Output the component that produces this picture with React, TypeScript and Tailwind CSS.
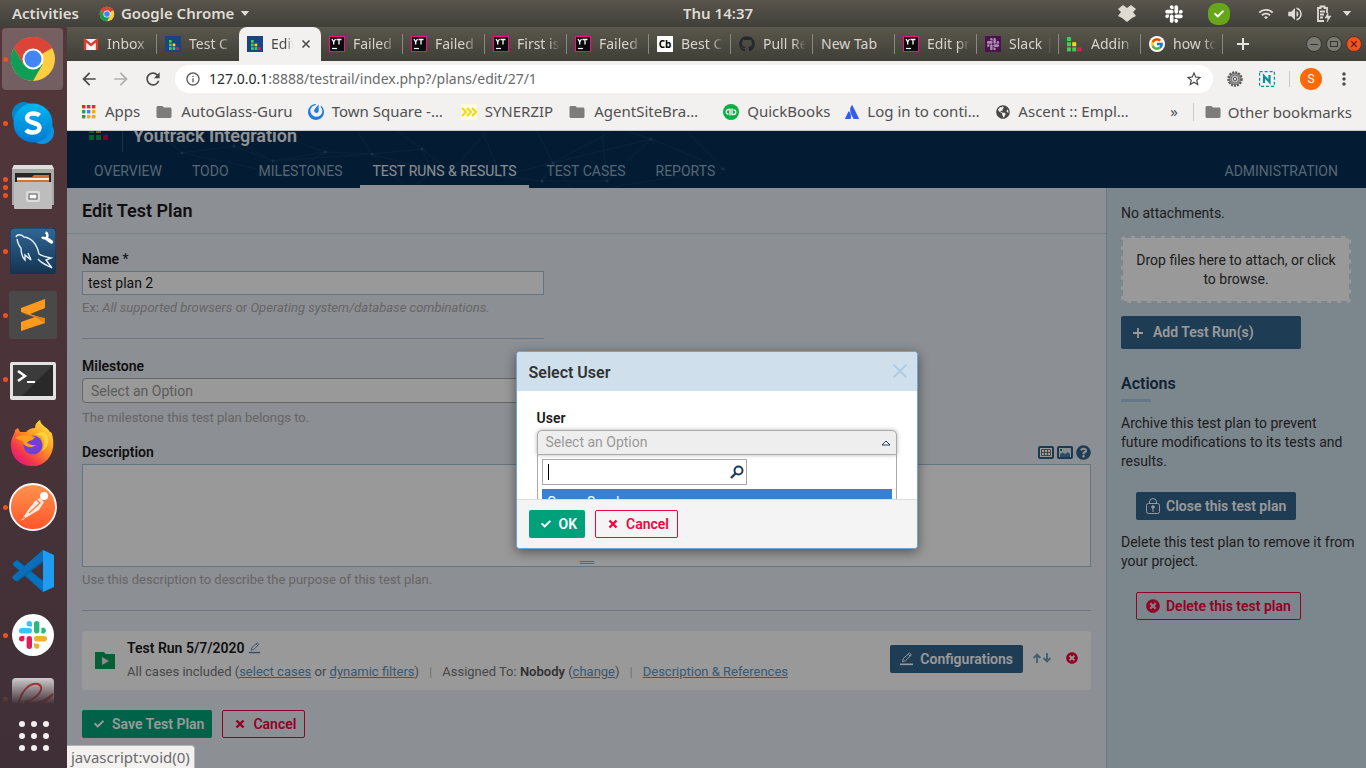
import type { ReactNode } from "react";
import { FaCheck, FaGithub, FaGlobeAmericas, FaQuestionCircle, FaSlack, FaTimesCircle } from "react-icons/fa";
import { FcGoogle } from "react-icons/fc";
import {
  MdArrowBack,
  MdArrowForward,
  MdFolder,
  MdInfoOutline,
  MdMoreVert,
  MdRefresh,
  MdStarBorder,
  MdVolumeUp,
  MdWifi,
} from "react-icons/md";
import { SiAtlassian, SiMattermost } from "react-icons/si";

/* ---------- Shared icons ---------- */

function ChromeLogo({ className }: { className: string }) {
  return (
    <svg viewBox="0 0 48 48" className={className} aria-hidden="true">
      <circle cx="24" cy="24" r="22" fill="#ffcd40" />
      <path d="M24 24 L4.9 13 A22 22 0 0 1 43.1 13 Z" fill="#db4437" />
      <path d="M24 13 H43.1 A22 22 0 0 0 4.9 13 L14.5 29.5 Z" fill="#db4437" />
      <path d="M4.9 13 A22 22 0 0 0 24 46 L33.5 29.5 L24 24 L14.5 29.5 Z" fill="#0f9d58" />
      <circle cx="24" cy="24" r="10.5" fill="#fff" />
      <circle cx="24" cy="24" r="8.5" fill="#4285f4" />
    </svg>
  );
}

function SlackColor({ className }: { className: string }) {
  return (
    <svg viewBox="0 0 30 30" className={className} aria-hidden="true">
      <g fill="#36c5f0"><rect x="1" y="8" width="13" height="5.4" rx="2.7" /><path d="M8.6 3.7a2.7 2.7 0 1 1 5.4 0v2.7h-2.7a2.7 2.7 0 0 1-2.7-2.7z" /></g>
      <g fill="#2eb67d"><rect x="16" y="1" width="5.4" height="12.4" rx="2.7" /><path d="M23.4 8a2.7 2.7 0 1 1 2.7 5.4h-2.7z" /></g>
      <g fill="#ecb22e"><rect x="16" y="16" width="13" height="5.4" rx="2.7" /><path d="M16 23.4h2.7a2.7 2.7 0 1 1-2.7 2.7z" /></g>
      <g fill="#e01e5a"><rect x="8.6" y="16" width="5.4" height="13" rx="2.7" /><path d="M6.4 16v2.7A2.7 2.7 0 1 1 3.7 16z" /></g>
    </svg>
  );
}

function YouTrackIcon() {
  return (
    <svg viewBox="0 0 16 16" className="size-4 shrink-0" aria-hidden="true">
      <rect x="0.5" y="0.5" width="15" height="15" fill="#0a0a0a" stroke="#ff0a8b" />
      <path d="M3 3l1.7 3V8.500M6.500 3L4.700 6M7.500 3.500h5M10 3.500v5" stroke="#fff" strokeWidth="1.300" fill="none" />
      <path d="M3 12.500h5" stroke="#fff" strokeWidth="1.200" />
    </svg>
  );
}

function RailSquares({ plate }: { plate: boolean }) {
  const x = plate ? 4 : 0;
  const s = plate ? 2.700 : 4;
  const p = plate ? 3.600 : 5.200;
  const y = plate ? 4 : 1;
  return (
    <svg viewBox="0 0 16 16" className="size-4 shrink-0" aria-hidden="true">
      {plate && <rect width="16" height="16" fill="#1d4482" />}
      <rect x={x} y={y} width={s} height={s} fill="#3ecf52" />
      <rect x={x} y={y + p} width={s} height={s} fill="#3ecf52" />
      <rect x={x + p} y={y + p} width={s} height={s} fill="#ffd21f" />
      <rect x={x} y={y + 2 * p} width={s} height={s} fill="#3ecf52" />
      <rect x={x + p} y={y + 2 * p} width={s} height={s} fill="#3ecf52" />
      <rect x={x + 2 * p} y={y + 2 * p} width={s} height={s} fill="#f5105a" />
    </svg>
  );
}

function CrossIcon({ className }: { className: string }) {
  return (
    <svg viewBox="0 0 10 10" className={className} aria-hidden="true">
      <path d="M1.500 1.500l7 7M8.500 1.500l-7 7" stroke="currentColor" strokeWidth="2.400" />
    </svg>
  );
}

function PencilIcon({ className }: { className: string }) {
  return (
    <svg viewBox="0 0 14 14" className={className} fill="none" stroke="currentColor" aria-hidden="true">
      <path d="M2.500 9.500l.8-3L9.500 1l2 1.800L5.600 8.700zM8.200 2.200l2 1.900" />
      <path d="M0 12.300h13" strokeWidth="1.600" />
    </svg>
  );
}

/* ---------- Desktop bar ---------- */

function TopBar() {
  return (
    <header className="flex h-[27px] shrink-0 items-center bg-linear-to-b from-[#59554d] to-[#403f39] text-[15px] font-semibold text-[#dfdbd2]">
      <div className="flex w-1/2 items-center pl-3">
        <span>Activities</span>
        <ChromeLogo className="mr-1.5 ml-5 size-4" />
        <span>Google Chrome</span>
        <svg viewBox="0 0 10 6" className="ml-1.5 h-[5px] w-2.5" aria-hidden="true"><path d="M0 0h10L5 6z" fill="currentColor" /></svg>
      </div>
      <time>Thu 14:37</time>
      <div className="ml-auto flex items-center pr-3.5">
        <svg viewBox="0 0 18 17" className="mr-7 h-[17px] w-[18px]" fill="currentColor" aria-hidden="true">
          <path d="M5 0l4 3 4-3 5 4-3 3 3 4-4 2-5 4-5-4-4-2 3-4-3-3z" />
        </svg>
        <FaSlack className="mr-6 size-5 text-white" />
        <span className="mr-7 grid size-[22px] place-items-center rounded-[9px] bg-[#67a51a] text-white"><FaCheck className="size-2.5" /></span>
        <MdWifi className="mr-3 size-4" />
        <MdVolumeUp className="mr-3 size-[18px]" />
        <svg viewBox="0 0 16 18" className="mr-2.5 h-[18px] w-4" fill="none" stroke="currentColor" strokeWidth="1.800" aria-hidden="true">
          <path d="M8 16H2V3h2.500V1.500h4V3H11v5M4 6.500h5M4 9.500h4M4 12.500h3" />
          <path d="M12 8l-3 5h3l-1 4 4-6h-3z" fill="currentColor" strokeWidth="0.500" />
        </svg>
        <svg viewBox="0 0 10 6" className="h-[5px] w-2.5" aria-hidden="true"><path d="M0 0h10L5 6z" fill="currentColor" /></svg>
      </div>
    </header>
  );
}

/* ---------- Dock ---------- */

function DockItem({ dots, active, children }: { dots: number; active?: boolean; children: ReactNode }) {
  return (
    <li className="flex h-16 shrink-0 items-center">
      <span className="flex w-2 shrink-0 flex-col items-center justify-center gap-[3px] pl-0.5">
        {Array.from({ length: dots }, (_, i) => (
          <i key={i} className="z-10 size-[5px] rounded-full bg-[#e95420]" />
        ))}
      </span>
      <span className={active ? "-ml-1.5 mr-1 grid h-[62px] flex-1 place-items-center rounded bg-white/20" : "-ml-1.5 mr-1 grid flex-1 place-items-center"}>
        {children}
      </span>
    </li>
  );
}

function Dock() {
  return (
    <aside className="flex w-[67px] shrink-0 flex-col overflow-hidden bg-linear-to-b from-[#53373a] to-[#3f2f37]">
      <ul className="flex min-h-0 flex-1 flex-col overflow-hidden [mask-image:linear-gradient(to_bottom,black_96%,transparent)]">
        <DockItem dots={1} active><ChromeLogo className="size-12" /></DockItem>
        <DockItem dots={1}>
          <svg viewBox="0 0 44 44" className="size-11" aria-hidden="true">
            <defs><linearGradient id="sk" x2="0" y2="1"><stop stopColor="#00b7f0" /><stop offset="1" stopColor="#0078d4" /></linearGradient></defs>
            <circle cx="13" cy="13" r="12" fill="#0087c9" /><circle cx="31" cy="31" r="12" fill="#1192df" />
            <circle cx="22" cy="22" r="19.500" fill="url(#sk)" />
            <path d="M28.500 14.500c-1.500-1.500-4-2-6.500-2-3.500 0-6 1.700-6 4.500 0 6 12.500 3.500 12.500 9.500 0 3-2.800 5-6.500 5-2.700 0-5.500-.8-7-2.500" fill="none" stroke="#fff" strokeWidth="4.500" />
          </svg>
        </DockItem>
        <DockItem dots={3}>
          <svg viewBox="0 0 44 44" className="size-11" aria-hidden="true">
            <path d="M3 0h38l2 4v36H1V4z" fill="#a9a9a9" /><path d="M3 0h38l2 4H1z" fill="#dedede" />
            <rect x="4" y="8" width="36" height="14" fill="#2b2421" /><path d="M6 12h15l2-2h15v10H6z" fill="#d9702a" /><path d="M6 13h32v2H6z" fill="#fff1e0" />
            <rect x="3" y="17" width="38" height="27" rx="1" fill="#bdbdbd" /><rect x="15" y="26" width="14" height="11" rx="2" fill="#dcdcdc" /><rect x="18" y="29" width="8" height="5" fill="#fafafa" stroke="#555" />
          </svg>
        </DockItem>
        <DockItem dots={1}>
          <svg viewBox="0 0 46 46" className="size-[46px]" aria-hidden="true">
            <defs><linearGradient id="my" x2="0" y2="1"><stop stopColor="#2f6797" /><stop offset="1" stopColor="#15334f" /></linearGradient></defs>
            <rect width="46" height="46" rx="4" fill="url(#my)" stroke="#16334f" />
            <path d="M6 9c1-3 5-3 8 0 8 1 13 8 15 17 3 2 7 3 12 4l-5 2 6 8c-5-3-10-4-14-9M7 11c1 5 2 7 4 9 0 5 1 9 4 12v-5l6 5-3-7" fill="none" stroke="#e4f0f8" strokeWidth="1.400" />
            <path d="M36.500 10.500l5 3.500" stroke="#fff" strokeWidth="3.400" strokeLinecap="round" />
            <path d="M35.500 4.500a3 3 0 1 1-3.500 4.500" fill="none" stroke="#fff" strokeWidth="2.400" />
          </svg>
        </DockItem>
        <DockItem dots={1}>
          <svg viewBox="0 0 48 48" className="size-12" aria-hidden="true">
            <rect width="48" height="48" rx="3" fill="#494949" />
            <path d="M12 17l24-9v9l-15 6 15 5v4l-24 8v-9l14-5-14-5z" fill="#ff9a1f" /><path d="M12 22l24 5v5l-10-6z" fill="#e57f12" />
          </svg>
        </DockItem>
        <DockItem dots={1}>
          <svg viewBox="0 0 46 38" className="mt-1 h-[38px] w-[46px]" aria-hidden="true">
            <rect width="46" height="38" rx="2" fill="#e2e2e2" /><rect x="3" y="3" width="40" height="31" fill="#292929" /><path d="M3 3h40L12 34H3z" fill="#3b3b3b" />
            <path d="M8 9l7 5-7 5" fill="none" stroke="#fff" strokeWidth="2.500" /><path d="M17 20h8" stroke="#fff" strokeWidth="2" />
          </svg>
        </DockItem>
        <DockItem dots={0}>
          <svg viewBox="0 0 46 46" className="size-[46px]" aria-hidden="true">
            <defs>
              <linearGradient id="ff" x1="1" x2=".2" y2="1"><stop stopColor="#fff44f" /><stop offset=".45" stopColor="#ff9a1f" /><stop offset=".8" stopColor="#f5344c" /><stop offset="1" stopColor="#e31587" /></linearGradient>
            </defs>
            <path d="M8 8l2 4h6c3-3 5-4 9-4 0-4 2-6 5-8 1 6 7 7 10 12 1 0 2 1 2 2 5 18-5 32-19 32C9 46 0 37 1 22c1-6 4-8 4-12z" fill="url(#ff)" />
            <circle cx="23" cy="25" r="9.500" fill="#6f3fd6" />
            <path d="M5 18c5-4 13-3 20-1-2 4-6 3-8 6 3 1 5 3 9 2-4 4-12 2-13-3-3-3-5-2-8-4z" fill="#ff9d1c" />
            <path d="M25 15c9-2 12 8 7 16 5-2 8-9 5-16-3-5-8-3-12 0z" fill="#ffd33a" />
          </svg>
        </DockItem>
        <DockItem dots={1}>
          <svg viewBox="0 0 48 48" className="size-12" aria-hidden="true">
            <defs><linearGradient id="pm" x2="0" y2="1"><stop stopColor="#ff9450" /><stop offset="1" stopColor="#ff5528" /></linearGradient></defs>
            <circle cx="24" cy="24" r="23" fill="url(#pm)" stroke="#fff" strokeWidth="1.800" />
            <circle cx="35" cy="13" r="4" fill="#fff" /><path d="M31 15l4 4-5 8-7 4-11 7 7-11 7-9z" fill="#ffe8dd" /><path d="M28 17l3 3-11 10M11 37l5-3" stroke="#ff7a41" strokeWidth="1.300" fill="none" />
          </svg>
        </DockItem>
        <DockItem dots={0}>
          <svg viewBox="0 0 42 42" className="size-[42px]" aria-hidden="true">
            <path d="M1 13l4-3 26 21v11L1 15z" fill="#0073c0" /><path d="M1 28l4 4L31 12V0L1 26z" fill="#0065a9" /><path d="M0 27c0 1 3 4 4 4L31 10V0z" fill="#0a6fb8" />
            <path d="M31 0l11 5v32l-11 5z" fill="#1f9cf0" />
          </svg>
        </DockItem>
        <DockItem dots={1}>
          <span className="grid size-[42px] place-items-center rounded-full bg-white"><SlackColor className="size-[30px]" /></span>
        </DockItem>
        <DockItem dots={1}>
          <svg viewBox="0 0 42 42" className="size-[42px]" aria-hidden="true">
            <rect width="42" height="42" rx="4" fill="#d3d3d3" />
            <path d="M7 36C4 18 16 4 26 6c8 3 0 15-13 18M13 24c10 3 18 0 28-8-8 10-18 14-28 8z" fill="none" stroke="#c0392f" strokeWidth="2" />
          </svg>
        </DockItem>
      </ul>
      <button aria-label="Show applications" className="flex h-16 shrink-0 items-center justify-center">
        <svg viewBox="0 0 30 30" className="size-[30px]" fill="#f2f0ee" aria-hidden="true">
          {[3, 15, 27].map((y) => [3, 15, 27].map((x) => <circle key={`${x}-${y}`} cx={x} cy={y} r="3" />))}
        </svg>
      </button>
    </aside>
  );
}

/* ---------- Browser frame ---------- */

const gmail = (
  <svg viewBox="0 0 16 16" className="size-4 shrink-0" aria-hidden="true">
    <rect x="1" y="3" width="14" height="11" fill="#f3f3f3" /><path d="M2 14V4l6 5 6-5v10" fill="none" stroke="#dd3b30" strokeWidth="2.400" />
  </svg>
);
const codebeamer = <span className="grid size-4 shrink-0 place-items-center bg-white text-[10px] font-bold text-black">Cb</span>;
const slackTile = <span className="grid size-4 shrink-0 place-items-center bg-[#4d1150] text-[#a88aaa]"><FaSlack className="size-3.5" /></span>;
const googleDisc = <span className="grid size-4 shrink-0 place-items-center rounded-full bg-white"><FcGoogle className="size-3.5" /></span>;

const tabs: { icon: ReactNode; label: string; active?: boolean }[] = [
  { icon: gmail, label: "Inbox" },
  { icon: <RailSquares plate />, label: "Test C" },
  { icon: <RailSquares plate />, label: "Edit", active: true },
  { icon: <YouTrackIcon />, label: "Failed" },
  { icon: <YouTrackIcon />, label: "Failed" },
  { icon: <YouTrackIcon />, label: "First is" },
  { icon: <YouTrackIcon />, label: "Failed" },
  { icon: codebeamer, label: "Best C" },
  { icon: <FaGithub className="size-4 shrink-0 text-[#24292e]" />, label: "Pull Re" },
  { icon: null, label: "New Tab" },
  { icon: <YouTrackIcon />, label: "Edit pr" },
  { icon: slackTile, label: "Slack |" },
  { icon: <RailSquares plate={false} />, label: "Addin" },
  { icon: googleDisc, label: "how to" },
];

function TabStrip() {
  return (
    <div className="flex h-[34px] items-stretch bg-linear-to-b from-[#5a584c] to-[#3f3e38] pr-1 pl-2 text-sm text-[#d8d4cb]">
      {tabs.map((tab, i) =>
        tab.active ? (
          <button key={i} className="flex w-[82px] items-center rounded-t-lg bg-[#f2f1f0] pl-2 text-[#4a4a4a]">
            {tab.icon}
            <span className="ml-2 w-[22px] overflow-hidden text-left whitespace-nowrap [mask-image:linear-gradient(to_right,black_70%,transparent)]">{tab.label}</span>
            <CrossIcon className="ml-2 size-2.5 [&_path]:[stroke-width:1.6]" />
          </button>
        ) : (
          <button key={i} className="flex w-[82px] items-center pl-2">
            {tab.icon}
            <span className={tab.icon ? "ml-2 flex-1 overflow-hidden text-left whitespace-nowrap [mask-image:linear-gradient(to_right,black_70%,transparent)]" : "flex-1 text-left whitespace-nowrap"}>{tab.label}</span>
            <i className={i === 1 ? "ml-1.5 h-5 w-px" : "ml-1.5 h-5 w-px bg-[#8b897f]"} />
          </button>
        ),
      )}
      <button aria-label="New tab" className="ml-3.5 self-center">
        <svg viewBox="0 0 12 12" className="size-3" aria-hidden="true"><path d="M6 0v12M0 6h12" stroke="#e6e3dc" strokeWidth="2" /></svg>
      </button>
      <div className="ml-auto flex items-center gap-1">
        <button aria-label="Minimize" className="grid size-4 place-items-center rounded-full border border-[#35342f] bg-[#7b7a72]"><i className="h-px w-2 bg-[#35342f]" /></button>
        <button aria-label="Maximize" className="grid size-4 place-items-center rounded-full border border-[#35342f] bg-[#7b7a72]"><i className="h-1.5 w-2 border border-[#35342f]" /></button>
        <button aria-label="Close window" className="grid size-4 place-items-center rounded-full border border-[#63301c] bg-[#f0531f] text-[#4c1d0c]"><CrossIcon className="size-2 [&_path]:[stroke-width:1.5]" /></button>
      </div>
    </div>
  );
}

function Toolbar() {
  return (
    <div className="flex h-9 items-center pr-3 pl-3 text-[#4a4a4a]">
      <button aria-label="Back"><MdArrowBack className="size-5" /></button>
      <button aria-label="Forward" className="ml-3 text-[#b0afae]"><MdArrowForward className="size-5" /></button>
      <button aria-label="Reload" className="ml-3"><MdRefresh className="size-5" /></button>
      <div className="ml-3 flex h-7 flex-1 items-center rounded-full bg-white px-2.5">
        <MdInfoOutline className="size-4 text-[#5a5a5a]" />
        <div className="ml-2 flex-1 text-sm text-[#6a6a6a]"><span className="text-[#2a2a2a]">127.0.0.1</span>:8888/testrail/index.php?/plans/edit/27/1</div>
        <button aria-label="Bookmark this page"><MdStarBorder className="size-[18px]" /></button>
      </div>
      <svg viewBox="0 0 16 16" className="ml-3.5 size-4" aria-hidden="true">
        <circle cx="8" cy="8" r="6.500" fill="#9a9a9a" stroke="#5c5c5c" strokeWidth="2.500" strokeDasharray="2 1" />
        <circle cx="8" cy="8" r="4" fill="#bbb" stroke="#777" /><circle cx="8" cy="8" r="1.600" fill="#eee" stroke="#555" />
      </svg>
      <svg viewBox="0 0 16 16" className="ml-4 size-4" aria-hidden="true">
        <rect x="0.600" y="0.600" width="14.800" height="14.800" fill="none" stroke="#0e8f9e" strokeWidth="1.200" strokeDasharray="3 2" />
        <path d="M5 12V5l5.500 6V4" fill="none" stroke="#0e8f9e" strokeWidth="2.200" />
      </svg>
      <i className="ml-3.5 h-4 w-px bg-[#c9c8c7]" />
      <span className="ml-2.5 grid size-[22px] place-items-center rounded-full bg-[#ff6a00] font-[Roboto] text-xs text-white">S</span>
      <button aria-label="Menu" className="ml-3"><MdMoreVert className="size-5" /></button>
    </div>
  );
}

const folder = <MdFolder className="size-[18px] shrink-0 text-[#7d7c7b]" />;

const bookmarks: { label: string; icon: ReactNode }[] = [
  {
    label: "Apps",
    icon: (
      <svg viewBox="0 0 16 16" className="size-4 shrink-0" aria-hidden="true">
        {["#ea2a1e", "#ea2a1e", "#ea2a1e", "#1fa055", "#4285f4", "#fbaa05", "#1fa055", "#fbaa05", "#fbaa05"].map((c, i) => (
          <rect key={i} x={1 + (i % 3) * 5} y={1 + Math.floor(i / 3) * 5} width="3.400" height="3.400" fill={c} />
        ))}
      </svg>
    ),
  },
  { label: "AutoGlass-Guru", icon: folder },
  { label: "Town Square -…", icon: <SiMattermost className="size-4 shrink-0 text-[#1e7be0]" /> },
  {
    label: "SYNERZIP",
    icon: (
      <svg viewBox="0 0 16 16" className="size-4 shrink-0" aria-hidden="true">
        <rect width="16" height="16" fill="#fffbe0" /><path d="M1 4l4 4-4 4M6 4l4 4-4 4M11 4l4 4-4 4" fill="none" stroke="#f2d70e" strokeWidth="2" />
      </svg>
    ),
  },
  { label: "AgentSiteBra…", icon: folder },
  {
    label: "QuickBooks",
    icon: (
      <svg viewBox="0 0 16 16" className="size-4 shrink-0" aria-hidden="true">
        <circle cx="8" cy="8" r="8" fill="#0cae46" /><path d="M7 11.500V5.500H5.500a2.300 2.300 0 0 0 0 4.600M9 4.500v6h1.500a2.300 2.300 0 0 0 0-4.600" fill="none" stroke="#fff" strokeWidth="1.300" />
      </svg>
    ),
  },
  { label: "Log in to conti…", icon: <SiAtlassian className="size-3.5 shrink-0 text-[#2f5cf5]" /> },
  { label: "Ascent :: Empl…", icon: <FaGlobeAmericas className="size-3.5 shrink-0 text-[#474747]" /> },
];

function BookmarkBar() {
  return (
    <nav aria-label="Bookmarks" className="flex h-[34px] items-center gap-[15px] border-b border-[#c8c7c6] pr-3.5 pb-1 pl-3.5 text-[15px] text-[#505050]">
      {bookmarks.map((b) => (
        <a key={b.label} href="#" className="flex items-center gap-2 whitespace-nowrap">
          {b.icon}
          <span className={b.label.endsWith("…") ? "min-w-[114px]" : undefined}>{b.label}</span>
        </a>
      ))}
      <span className="ml-auto">»</span>
      <a href="#" className="flex items-center gap-1.5 border-l border-[#c9c8c7] pl-2.5 leading-4 whitespace-nowrap">{folder}Other bookmarks</a>
    </nav>
  );
}

/* ---------- Application ---------- */

const navItems = ["OVERVIEW", "TODO", "MILESTONES", "TEST RUNS & RESULTS", "TEST CASES", "REPORTS"];

function AppHeader() {
  return (
    <header className="relative flex h-[57px] shrink-0 flex-col justify-end overflow-hidden bg-[#073055]">
      <svg viewBox="0 0 700 57" className="absolute top-0 left-0 h-[57px] w-[700px]" fill="none" stroke="#123f63" strokeWidth="0.800" aria-hidden="true">
        <path d="M90 0L115 22L167 15L206 30L258 21L219 44L206 30L150 0M258 21L200 0M258 21L305 23L355 18L365 40L305 23L290 0M305 23L340 57M355 18L330 0M355 18L384 41L365 40L345 57M384 41L420 0M384 41L434 45L486 32L475 50L434 45L415 0M486 32L505 57M486 32L584 8L560 0M486 32L545 0M486 32L470 0M584 8L656 38L540 57M584 8L540 50L475 50M656 38L620 0M540 50L535 0M219 44L115 22M365 40L434 45M206 30L305 23" />
        <g fill="#24587f" stroke="none">
          {["115,22", "167,15", "206,30", "258,21", "305,23", "355,18", "365,40", "384,41", "434,45", "486,32", "584,8", "656,38", "540,50", "475,50", "219,44"].map((p) => {
            const [x, y] = p.split(",");
            return <circle key={p} cx={x} cy={y} r="1.500" />;
          })}
        </g>
      </svg>
      <div className="relative flex items-end pl-[22px]">
        <svg viewBox="0 0 20 19" className="mb-3 h-[19px] w-5" aria-hidden="true">
          <path d="M0 0h5v5H0zM0 7h5v5H0zM0 14h5v5H0zM7 14h5v5H7z" fill="#0a9e48" /><path d="M7 7h5v5H7z" fill="#c2a312" /><path d="M14 14h5v5h-5z" fill="#e0003c" />
        </svg>
        <i className="ml-[13px] h-8 w-px bg-[#2e587c]" />
        <span className="mb-1.5 ml-2.5 text-lg leading-5 font-semibold text-[#f0f4f8]">Youtrack Integration</span>
      </div>
      <nav aria-label="Main" className="relative flex h-9 shrink-0 items-stretch gap-1.5 pr-4 pl-[15px] text-sm leading-5">
        {navItems.map((n) => (
          <a key={n} href="#" className={n === "TEST RUNS & RESULTS" ? "border-b-[3px] border-[#e9eef6] px-3 pt-[9px] text-[#e6ebf0]" : "px-3 pt-[9px] text-[#8faac0]"}>{n}</a>
        ))}
        <a href="#" className="ml-auto px-3 pt-[9px] text-[#8faac0]">ADMINISTRATION</a>
      </nav>
    </header>
  );
}

const hint = "text-[13px] leading-5 text-[#aaaaaa]";
const redButton = "flex h-7 items-center gap-2 rounded-xs border border-[#f5033f] pr-2 pl-3 text-sm font-semibold text-[#f5033f]";

function PlanForm() {
  return (
    <main className="min-w-0 flex-1">
      <h1 className="border-b border-[#c9dde6] px-[15px] py-[9px] text-lg leading-[27px] font-semibold text-[#1a1a1a]">Edit Test Plan</h1>
      <form className="px-[15px] pt-4" onSubmit={(e) => e.preventDefault()}>
        <div className="max-w-[462px] border-b border-[#a9c9e0] pb-5">
          <label htmlFor="name" className="block text-sm leading-[18px] font-semibold text-[#1a1a1a]">Name <span className="font-normal">*</span></label>
          <input id="name" defaultValue="test plan 2" className="mt-[3px] block h-6 w-full border border-[#a3c4dd] bg-white px-[5px] text-sm text-[#1a1a1a]" />
          <p className={`mt-[3px] ${hint}`}>Ex: <em>All supported browsers</em> or <em>Operating system/database combinations.</em></p>
        </div>
        <div className="max-w-[462px] pt-[18px]">
          <label htmlFor="milestone" className="block text-sm leading-[18px] font-semibold text-[#1a1a1a]">Milestone</label>
          <select id="milestone" className="mt-[3px] block h-[25px] w-full appearance-none rounded border border-[#aaa] bg-white px-2 text-sm text-[#999]"><option>Select an Option</option></select>
          <p className={`mt-[5px] ${hint}`}>The milestone this test plan belongs to.</p>
        </div>
        <div className="mt-[15px] flex items-center">
          <label htmlFor="description" className="text-sm leading-[18px] font-semibold text-[#1a1a1a]">Description</label>
          <div className="ml-auto flex items-center gap-[3px] text-[#34648e]">
            <button type="button" aria-label="Insert table">
              <svg viewBox="0 0 16 13" className="h-[13px] w-4" aria-hidden="true"><rect x="1" y="1" width="14" height="11" rx="1" fill="#fff" stroke="#2c5f8b" strokeWidth="2" /><path d="M3.500 3.500h9v6h-9zM3.500 6.500h9M6.500 3.500v6M9.500 3.500v6" fill="none" stroke="#777" /></svg>
            </button>
            <button type="button" aria-label="Insert image">
              <svg viewBox="0 0 16 13" className="h-[13px] w-4" aria-hidden="true"><rect x="1" y="1" width="14" height="11" rx="1" fill="#e4eaf0" stroke="#2c5f8b" strokeWidth="2" /><path d="M3 11V8l3-1.500 2 1.500 3-2 2 2v3z" fill="#4a82b0" /><rect x="3" y="3" width="2" height="2" fill="#0a9e48" /></svg>
            </button>
            <button type="button" aria-label="Formatting help"><FaQuestionCircle className="size-[15px]" /></button>
          </div>
        </div>
        <div className="relative mt-[3px]">
          <textarea id="description" className="block h-[103px] w-full resize-none border border-[#a3c4dd] bg-white" />
          <svg viewBox="0 0 15 3" className="absolute bottom-[3px] left-1/2 h-[3px] w-[15px] -translate-x-1/2" aria-hidden="true"><path d="M0 .5h15M0 2.500h15" stroke="#8fb0c9" /></svg>
        </div>
        <p className={`mt-[3px] ${hint}`}>Use this description to describe the purpose of this test plan.</p>
        <hr className="mt-5 border-[#a9c9e0]" />

        <section className="mt-5 flex items-center rounded bg-white px-[13px] py-2">
          <svg viewBox="0 0 20 17" className="h-[17px] w-5 shrink-0" aria-hidden="true"><path d="M0 0h9l1.500 2H20v15H0z" fill="#0a9e5a" /><path d="M7 5v8l7-4z" fill="#e6e6e6" /></svg>
          <div className="ml-3 text-[#777]">
            <h2 className="flex items-center gap-1 text-sm leading-[18px] font-semibold text-[#1a1a1a]">Test Run 5/7/2020 <PencilIcon className="size-3 text-[#4b83b0]" /></h2>
            <p className="mt-[5px] text-[13px] leading-5">
              All cases included (<a href="#" className="text-[#5c94c2] underline">select cases</a> or <a href="#" className="text-[#5c94c2] underline">dynamic filters</a>)
              <span className="mx-2.5 text-[#bbb]">|</span>Assigned To: <b className="font-semibold text-[#555]">Nobody</b> (<a href="#" className="text-[#5c94c2] underline">change</a>)
              <span className="mx-2.5 text-[#bbb]">|</span><a href="#" className="text-[#5c94c2] underline">Description &amp; References</a>
            </p>
          </div>
          <div className="ml-auto flex items-center pb-1">
            <button type="button" className="flex h-7 items-center gap-1.5 rounded-xs bg-[#34648e] px-2.5 text-sm font-semibold text-white"><PencilIcon className="size-3.5" />Configurations</button>
            <button type="button" aria-label="Reorder" className="mr-[15px] ml-2.5 pb-0.5 text-[#6a9dc4]">
              <svg viewBox="0 0 18 10" className="h-2.5 w-[18px]" fill="none" stroke="currentColor" strokeWidth="1.800" aria-hidden="true">
                <path d="M4 10V1.500M.6 5L4 1.500 7.400 5M14 0v8.500M10.600 5l3.400 3.500L17.400 5" />
              </svg>
            </button>
            <button type="button" aria-label="Remove" className="pb-0.5"><FaTimesCircle className="size-3 text-[#f5033f]" /></button>
          </div>
        </section>

        <div className="mt-5 flex gap-2.5">
          <button className="flex h-7 items-center gap-2 rounded-xs bg-[#00a57b] pr-2 pl-3 text-sm font-semibold text-white"><FaCheck className="size-2.5" />Save Test Plan</button>
          <button type="button" className={redButton}><CrossIcon className="size-2.5" />Cancel</button>
        </div>
      </form>
    </main>
  );
}

function Sidebar() {
  return (
    <aside className="w-[260px] shrink-0 border-l border-[#a9c9e0] bg-[#cfdfec] pt-4 pr-[15px] pl-3.5 text-sm leading-[19px] text-[#333]">
      <p>No attachments.</p>
      <button className="mt-[13px] w-full rounded border-2 border-dashed border-[#cfdfec] bg-white px-3 pt-[13px] pb-3">Drop files here to attach, or click to browse.</button>
      <button className="mt-[13px] flex h-[33px] w-[180px] items-center gap-2.5 rounded-xs bg-[#34648e] pl-3 font-semibold text-white">
        <svg viewBox="0 0 10 10" className="size-2.5" aria-hidden="true"><path d="M5 0v10M0 5h10" stroke="currentColor" strokeWidth="1.800" /></svg>
        Add Test Run(s)
      </button>
      <h2 className="mt-[25px] text-base leading-5 font-semibold text-[#1b3a58]">Actions</h2>
      <i className="mt-[5px] block h-[3px] w-[30px] bg-[#a9c9e0]" />
      <p className="mt-3">Archive this test plan to prevent future modifications to its tests and results.</p>
      <button className="mt-[21px] ml-[15px] flex h-7 items-center gap-1.5 rounded-xs bg-[#34648e] px-2.5 font-semibold text-white">
        <svg viewBox="0 0 14 16" className="h-4 w-3.5" fill="none" stroke="currentColor" aria-hidden="true"><rect x="0.500" y="5.500" width="13" height="10" rx="2" /><path d="M3.500 5V4a3.500 3.500 0 0 1 7 0v1M7 10v4" /><circle cx="7" cy="9" r="1.300" fill="currentColor" /></svg>
        Close this test plan
      </button>
      <p className="-mr-2.5 mt-[13px]">Delete this test plan to remove it from your project.</p>
      <button className="mt-[21px] ml-[15px] flex h-7 items-center gap-1.5 rounded-xs border border-[#f5033f] px-[9px] font-semibold text-[#f5033f]"><FaTimesCircle className="size-3.5" />Delete this test plan</button>
    </aside>
  );
}

function SelectUserDialog() {
  return (
    <div role="dialog" aria-labelledby="dialog-title" className="flex w-[402px] flex-col overflow-hidden rounded border border-[#6ba6d6] bg-white text-sm shadow-[0_3px_12px_rgba(0,0,0,0.45)]">
      <div className="flex h-[39px] items-center bg-[#cfe0ec] px-3">
        <h2 id="dialog-title" className="pt-1 text-base font-semibold text-[#333]">Select User</h2>
        <button aria-label="Close" className="-mr-1 ml-auto text-[#adcbe4]"><CrossIcon className="size-[18px] [&_path]:[stroke-width:1.1]" /></button>
      </div>
      <div className="h-[108px] overflow-hidden px-5 pt-[18px]">
        <label htmlFor="user" className="block leading-[18px] font-semibold text-[#1a1a1a]">User</label>
        <div className="relative mt-[3px]">
          <select id="user" className="block h-[25px] w-full appearance-none rounded-t-[5px] border border-[#aaa] bg-[#eee] px-2 text-[#999] shadow-[0_0_4px_rgba(0,0,0,0.3)]"><option>Select an Option</option></select>
          <svg viewBox="0 0 10 6" className="absolute top-2.5 right-1.5 h-1.5 w-2.5" aria-hidden="true"><path d="M1 5L5 1l4 4z" fill="#fff" stroke="#1d3f5c" /></svg>
        </div>
        <div className="border-x border-[#aaa] px-1 pt-1">
          <div className="relative w-[205px]">
            <input aria-label="Search users" className="block h-[26px] w-full border border-[#aaa] bg-white px-1.5" />
            <i className="absolute top-[5px] left-1.5 h-4 w-px bg-black" />
            <svg viewBox="0 0 14 14" className="absolute top-1.5 right-[3px] size-3.5" fill="none" stroke="#1d3f5c" aria-hidden="true"><circle cx="8.500" cy="5.500" r="4" strokeWidth="2" /><path d="M5.500 8.500L1 13" strokeWidth="2.400" /></svg>
          </div>
          <ul className="mt-1"><li className="bg-[#3b7fce] px-1.5 py-1 leading-[18px] text-white">Sagar Sood</li></ul>
        </div>
      </div>
      <div className="flex gap-2.5 border-t border-[#ddd] bg-[#f4f4f4] px-3 py-2.5">
        <button className="flex h-7 items-center gap-2 rounded-xs bg-[#00a17a] pr-2 pl-3 font-semibold text-white"><FaCheck className="size-2.5" />OK</button>
        <button className={redButton}><CrossIcon className="size-2.5" />Cancel</button>
      </div>
    </div>
  );
}

export default function App() {
  return (
    <div className="flex h-screen flex-col overflow-hidden font-['Noto_Sans',sans-serif]">
      <TopBar />
      <div className="flex min-h-0 flex-1">
        <Dock />
        <div className="flex min-w-0 flex-1 flex-col bg-[#f2f1f0]">
          <TabStrip />
          <Toolbar />
          <BookmarkBar />
          <div className="relative flex min-h-0 flex-1 flex-col bg-[#e9eef6] font-[Roboto,sans-serif]">
            <AppHeader />
            <div className="flex min-h-0 flex-1">
              <PlanForm />
              <Sidebar />
            </div>
            <div className="absolute inset-0 flex items-center justify-center bg-black/40">
              <SelectUserDialog />
            </div>
            <div className="absolute bottom-0 left-0 rounded-tr border-t border-r border-[#b5b4b3] bg-[#f2f1f0] px-1 font-['Noto_Sans',sans-serif] text-[15px] leading-[22px] text-[#6a6a6a]">javascript:void(0)</div>
          </div>
        </div>
      </div>
    </div>
  );
}
